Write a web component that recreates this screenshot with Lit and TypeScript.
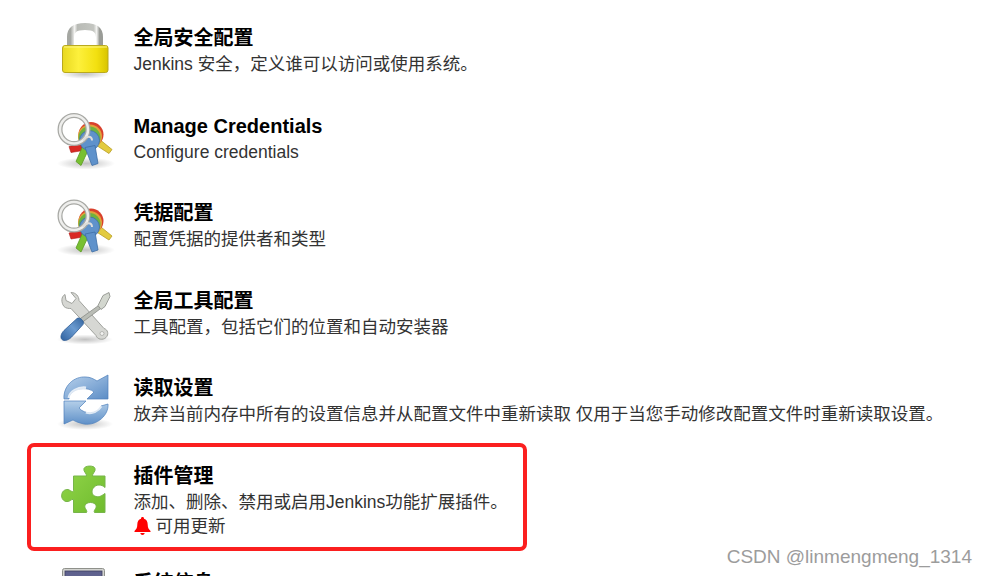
import { LitElement, html, css, svg } from "lit";
import { customElement } from "lit/decorators.js";

const defs = svg`<defs>
<linearGradient id="lockBody" x1="0" y1="0" x2="1" y2="0"><stop offset="0" stop-color="#e8d820"/><stop offset=".35" stop-color="#fdf03c"/><stop offset=".75" stop-color="#f2e010"/><stop offset="1" stop-color="#d9c400"/></linearGradient>
<linearGradient id="shackle" x1="0" y1="0" x2="1" y2="0"><stop offset="0" stop-color="#a5a7a2"/><stop offset=".14" stop-color="#f4f4f2"/><stop offset=".24" stop-color="#b9bbb6"/><stop offset=".8" stop-color="#c4c6c1"/><stop offset=".9" stop-color="#f4f4f2"/><stop offset="1" stop-color="#9a9c97"/></linearGradient>
<radialGradient id="shadow"><stop offset="0" stop-color="#000" stop-opacity=".24"/><stop offset="1" stop-color="#000" stop-opacity="0"/></radialGradient>
<linearGradient id="handle" x1="0" y1="1" x2="1" y2="0"><stop offset="0" stop-color="#2f619f"/><stop offset=".55" stop-color="#6b9bd0"/><stop offset="1" stop-color="#34659f"/></linearGradient>
<linearGradient id="arrow" x1="0" y1="0" x2="0" y2="1"><stop offset="0" stop-color="#b4cfe9"/><stop offset="1" stop-color="#5f90c8"/></linearGradient>
<linearGradient id="arrow2" x1="0" y1="0" x2="1" y2="1"><stop offset="0" stop-color="#b9d2ec"/><stop offset="1" stop-color="#5c8dc6"/></linearGradient>
<linearGradient id="puzzle" x1="0" y1="0" x2="1" y2="1"><stop offset="0" stop-color="#93d64a"/><stop offset="1" stop-color="#6fbb2e"/></linearGradient>
<linearGradient id="screen" x1="0" y1="0" x2="0" y2="1"><stop offset="0" stop-color="#5c5f8c"/><stop offset="1" stop-color="#7678a2"/></linearGradient>
</defs>`;

const lock = svg`
<ellipse cx="35" cy="59" rx="25" ry="5" fill="url(#shadow)"/>
<path d="M20.500 32V22C20.500 15 25 11.500 35 11.500S49.500 15 49.500 22V32" fill="none" stroke="url(#shackle)" stroke-width="7"/>
<rect x="12.500" y="30.500" width="45.500" height="27" rx="2.500" fill="url(#lockBody)" stroke="#b9a91e" stroke-width="1"/>
<path d="M14 32H57" stroke="#fdf58a" stroke-width="1"/>`;

const keys = svg`
<ellipse cx="36" cy="58" rx="29" ry="6" fill="url(#shadow)"/>
<path d="M46 31L62 44L59 48L42 37Z" fill="#e3cb3f" stroke="#b79d24" stroke-width=".8"/>
<path d="M31 38L19 41L21 47L33 45Z" fill="#d92a24" stroke="#b21c18" stroke-width=".6"/>
<circle cx="41" cy="29" r="12.500" fill="#d9402c"/>
<circle cx="40" cy="31" r="12" fill="#e0a23a"/>
<circle cx="39.500" cy="32" r="11" fill="#6db33f"/>
<path d="M33 40L26 56L31 60L39 43Z" fill="#78c032" stroke="#5b9a22" stroke-width=".8"/>
<circle cx="39.500" cy="35" r="10" fill="#5f92cb" stroke="#3f6ea6" stroke-width=".8"/>
<path d="M35 42L42 60L48 58L45 40Z" fill="#5f92cb" stroke="#3f6ea6" stroke-width=".8"/>
<circle cx="24" cy="24" r="14" fill="none" stroke="#a8a9a5" stroke-width="5"/>
<circle cx="24" cy="24" r="14" fill="none" stroke="#eeeeec" stroke-width="2.500"/>
<path d="M33 35C36 30 42 30 42 35" fill="none" stroke="#dcdcda" stroke-width="2"/>`;

const tools = svg`
<ellipse cx="35" cy="54" rx="28" ry="5" fill="url(#shadow)"/>
<path d="M15 9C11 11 11 17 14 21C16 23 19 23 21 23L46 50C47 54 53 55 56 52C59 49 58 44 54 43L29 15C29 11 26 7 21 7L26 13L22 18L16 15Z" fill="#d6d7d3" stroke="#a0a29d" stroke-width="1"/>
<circle cx="52" cy="48" r="2" fill="#f2f2f0" stroke="#a0a29d" stroke-width=".7"/>
<path d="M29 34L50 19L52 22L32 37Z" fill="#babdb6" stroke="#888a85" stroke-width=".8"/>
<path d="M48 20L53 10L59 7L60 11L55 21L51 24Z" fill="#d3d7cf" stroke="#888a85" stroke-width=".8"/>
<path d="M27 33C30 31 35 36 33 39L23 50C19 55 14 56 12 54C10 52 11 48 14 45Z" fill="url(#handle)" stroke="#2c5a94" stroke-width=".8"/>`;

const refresh = svg`
<ellipse cx="35" cy="56" rx="28" ry="6" fill="url(#shadow)"/>
<path d="M14 31C13 18 24 8 36 9C40 9 44 11 47 13L58 7V31H37L44 24C38 19 28 20 23 24C20 26 19 29 19 31Z" fill="url(#arrow2)" stroke="#4d7fbb" stroke-width=".7"/>
<path d="M14 33H36L29 40C35 47 47 46 51 38L58 36C59 47 47 58 34 56C30 55 26 54 23 52L14 56Z" fill="url(#arrow)" stroke="#4d7fbb" stroke-width=".7"/>
<path d="M19 30C20 24 28 19 36 20" fill="none" stroke="#fff" stroke-width="3" opacity=".75"/>
<path d="M36 44C42 46 48 43 51 38" fill="none" stroke="#fff" stroke-width="3" opacity=".75"/>`;

const puzzle = svg`
<path d="M23.500 20.500H36.500C37 18 33 16 34 13C35 10 44 9.500 45 13C46 16 42 18 42.500 20.500H55V32C52 29 46 28 43 33C41 36 42 40 46 41C49 42 52 40 55 38V57H44.500C43 55 47 53 46 50C45 46 36 46 35 50C34 53 38 55 36.500 57H23.500V44C21 43 20 47 16 46C12 45 11 41 12 38C13 34 18 33 20 35C22 36 23 37 23.500 35Z" fill="url(#puzzle)" stroke="#77b54a" stroke-width="1"/>`;

const monitor = svg`
<rect x="12.500" y="12.500" width="42" height="40" rx="2" fill="#d3d4d0" stroke="#8f918b"/>
<rect x="15" y="15" width="37" height="30" fill="url(#screen)" stroke="#3f4060" stroke-width=".8"/>`;

interface Row { icon: unknown; dy: number; title: string; desc: string; note?: string; }

const rows: Row[] = [
  { icon: lock, dy: 0, title: "全局安全配置", desc: "Jenkins 安全，定义谁可以访问或使用系统。" },
  { icon: keys, dy: 2.5, title: "Manage Credentials", desc: "Configure credentials" },
  { icon: keys, dy: 2, title: "凭据配置", desc: "配置凭据的提供者和类型" },
  { icon: tools, dy: 7.5, title: "全局工具配置", desc: "工具配置，包括它们的位置和自动安装器" },
  { icon: refresh, dy: 3, title: "读取设置", desc: "放弃当前内存中所有的设置信息并从配置文件中重新读取 仅用于当您手动修改配置文件时重新读取设置。" },
  { icon: puzzle, dy: 2.5, title: "插件管理", desc: "添加、删除、禁用或启用Jenkins功能扩展插件。", note: "可用更新" },
  { icon: monitor, dy: -4, title: "系统信息", desc: "" },
];

@customElement("app-root")
export class AppRoot extends LitElement {
  static styles = css`
    :host { display: block; position: relative; width: 987px; height: 576px; overflow: hidden; background: #fff;
      font-family: "Liberation Sans", "Noto Sans CJK SC", sans-serif; }
    .row { display: flex; gap: 13.5px; padding: 15px 0 11px 50px; }
    .icon { flex: none; width: 70px; height: 70px; margin-bottom: -20px; display: block; }
    .text { padding-top: 9px; min-width: 0; }
    .title { font-size: 20px; line-height: 28px; font-weight: 700; color: #000; white-space: nowrap; }
    .desc { font-size: 17.5px; line-height: 24.5px; color: #333; white-space: nowrap; }
    .note { display: flex; align-items: center; gap: 5px; margin-bottom: -5px; }
    .bell { width: 17px; height: 18px; flex: none; display: block; }
    .frame { position: absolute; left: 27px; top: 443px; width: 492px; height: 100px; border: 4px solid #fb1f1f; border-radius: 7px; }
    .mark { position: absolute; right: 15px; top: 546px; font-size: 19px; line-height: 22px; color: #9c9c9c; white-space: nowrap; }
  `;

  render() {
    return html`
      ${rows.map(r => html`
        <div class="row">
          <svg class="icon" viewBox="0 0 70 70">${defs}<g transform="translate(0 ${r.dy})">${r.icon}</g></svg>
          <div class="text">
            <div class="title">${r.title}</div>
            ${r.desc ? html`<div class="desc">${r.desc}</div>` : ""}
            ${r.note ? html`<div class="desc note">
              <svg class="bell" viewBox="0 0 17 18"><path d="M8.500 0C7.500 0 7 .7 7 1.700C4.500 2.400 3.300 4.500 3.300 7.500C3.300 10.500 2.500 12 .5 14V15H16.500V14C14.500 12 13.700 10.500 13.700 7.500C13.700 4.500 12.500 2.400 10 1.700C10 .7 9.500 0 8.500 0ZM6.300 16C6.500 17.200 7.400 18 8.500 18S10.500 17.200 10.700 16Z" fill="#f00"/></svg>
              <span>${r.note}</span></div>` : ""}
          </div>
        </div>`)}
      <div class="frame"></div>
      <div class="mark">CSDN @linmengmeng_1314</div>
    `;
  }
}
